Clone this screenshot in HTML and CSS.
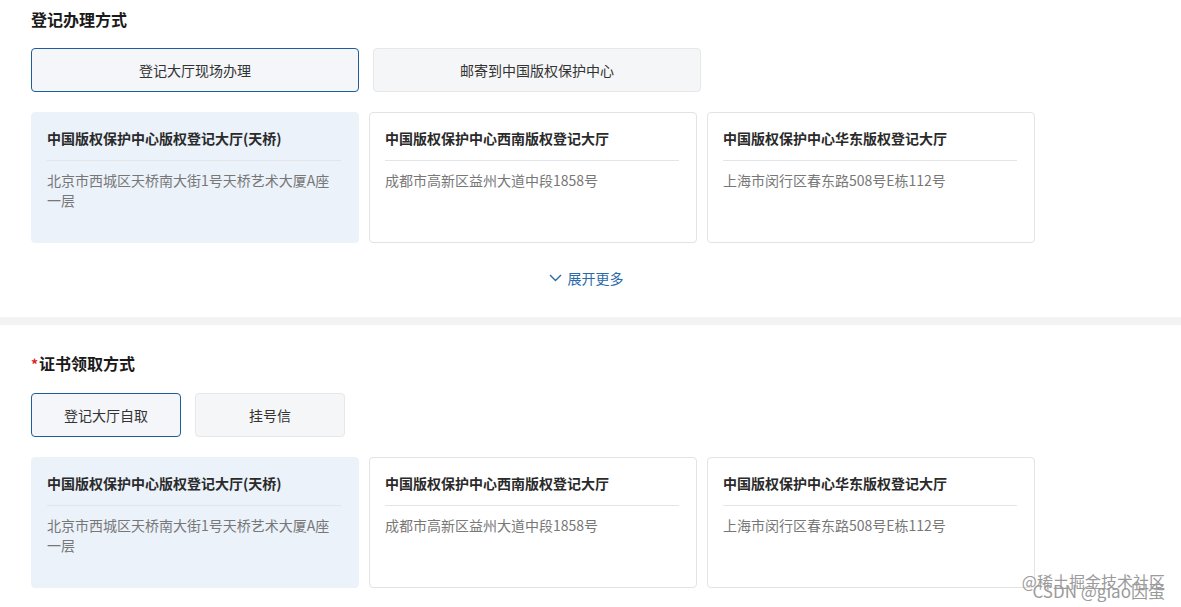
FILE: index.html
```html
<!doctype html>
<html lang="zh-CN">
  <head>
    <meta charset="UTF-8" />
    <meta name="viewport" content="width=device-width, initial-scale=1.0" />
    <title>证书登记</title>
    <link rel="stylesheet" href="styles.css">
  </head>
  <body>
    <div class="section">
      <h2 class="title">登记办理方式</h2>
      <div class="options wide">
        <div class="option active">登记大厅现场办理</div>
        <div class="option">邮寄到中国版权保护中心</div>
      </div>
      <div class="halls">
        <div class="hall active">
          <div class="hall-name">中国版权保护中心版权登记大厅(天桥)</div>
          <div class="hall-addr">北京市西城区天桥南大街1号天桥艺术大厦A座一层</div>
        </div>
        <div class="hall">
          <div class="hall-name">中国版权保护中心西南版权登记大厅</div>
          <div class="hall-addr">成都市高新区益州大道中段1858号</div>
        </div>
        <div class="hall">
          <div class="hall-name">中国版权保护中心华东版权登记大厅</div>
          <div class="hall-addr">上海市闵行区春东路508号E栋112号</div>
        </div>
      </div>
      <div class="more">
        <svg width="13" height="8" viewBox="0 0 13 8"><polyline points="1,1 6.5,6.5 12,1" fill="none" stroke="#2b6aa9" stroke-width="1.4"/></svg>
        <span>展开更多</span>
      </div>
    </div>

    <div class="divider"></div>

    <div class="section second">
      <h2 class="title"><span class="req">*</span>证书领取方式</h2>
      <div class="options narrow">
        <div class="option active">登记大厅自取</div>
        <div class="option">挂号信</div>
      </div>
      <div class="halls">
        <div class="hall active">
          <div class="hall-name">中国版权保护中心版权登记大厅(天桥)</div>
          <div class="hall-addr">北京市西城区天桥南大街1号天桥艺术大厦A座一层</div>
        </div>
        <div class="hall">
          <div class="hall-name">中国版权保护中心西南版权登记大厅</div>
          <div class="hall-addr">成都市高新区益州大道中段1858号</div>
        </div>
        <div class="hall">
          <div class="hall-name">中国版权保护中心华东版权登记大厅</div>
          <div class="hall-addr">上海市闵行区春东路508号E栋112号</div>
        </div>
      </div>
    </div>

    <div class="watermark">
      <span>@稀土掘金技术社区</span>
      <span>CSDN @giao因蛋</span>
    </div>
  </body>
</html>
```

FILE: styles.css
```css
body {
  margin: 0;
  background: #fff;
  font-family: "Noto Sans CJK SC", "Microsoft YaHei", sans-serif;
  color: #333;
  height: 607px;
  overflow: hidden;
  position: relative;
}
.section {
  padding: 8px 0 29px 31px;
}
.section.second {
  padding-top: 27px;
}
.title {
  margin: 0;
  font-size: 16px;
  line-height: 22px;
  font-weight: 700;
  color: #1a1a1a;
}
.req {
  color: #e0201b;
  font-size: 14px;
  margin-right: 1px;
}
.options {
  display: flex;
  gap: 14px;
  margin-top: 18px;
}
.option {
  box-sizing: border-box;
  height: 44px;
  line-height: 42px;
  text-align: center;
  font-size: 14px;
  color: #333;
  background: #f5f6f7;
  border: 1px solid #e6e7e9;
  border-radius: 4px;
}
.wide .option {
  width: 328px;
}
.narrow .option {
  width: 150px;
}
.option.active {
  background: #f4f6f9;
  border-color: #1f5e9c;
}
.halls {
  display: flex;
  gap: 10px;
  margin-top: 20px;
}
.hall {
  box-sizing: border-box;
  width: 328px;
  height: 131px;
  padding: 15px 15px 0;
  border: 1px solid #e3e3e3;
  border-radius: 4px;
  background: #fff;
}
.hall.active {
  background: #ebf2fa;
  border-color: #ebf2fa;
}
.hall-name {
  font-size: 14px;
  line-height: 20px;
  font-weight: 700;
  color: #2a2a2a;
  padding-bottom: 12px;
  border-bottom: 1px solid #e2e5e9;
  margin-right: 2px;
}
.hall-addr {
  margin-top: 9px;
  font-size: 14px;
  line-height: 20px;
  color: #777;
  padding-right: 6px;
}
.more {
  display: flex;
  align-items: center;
  justify-content: center;
  gap: 6px;
  width: 1160px;
  margin-top: 25px;
  font-size: 14px;
  line-height: 20px;
  color: #2b6aa9;
  margin-left: -25px;
}
.divider {
  height: 8px;
  background: #f3f3f3;
}
.watermark {
  position: absolute;
  right: 16px;
  bottom: 8px;
  width: 170px;
  height: 30px;
  color: #8a8a8a;
  font-size: 16px;
  opacity: 0.85;
}
.watermark span {
  position: absolute;
  right: 0;
  white-space: nowrap;
}
.watermark span:first-child {
  top: 0;
}
.watermark span:last-child {
  top: 9px;
  font-size: 17px;
}
```
